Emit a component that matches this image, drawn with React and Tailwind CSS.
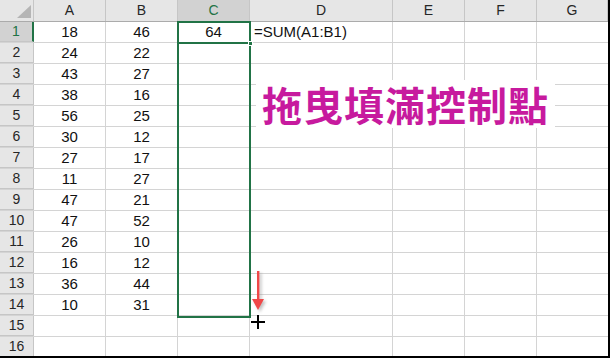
import React from "react";

const rows = [
  [18, 46], [24, 22], [43, 27], [38, 16], [56, 25], [30, 12], [27, 17],
  [11, 27], [47, 21], [47, 52], [26, 10], [16, 12], [36, 44], [10, 31], [], [],
];

const cols = [
  { key: "A", w: "w-[72px]" },
  { key: "B", w: "w-[72px]" },
  { key: "C", w: "w-[72px]" },
  { key: "D", w: "w-[143px]" },
  { key: "E", w: "w-[72px]" },
  { key: "F", w: "w-[72px]" },
  { key: "G", w: "flex-1" },
];

const HeaderRow = () => (
  <div className="flex h-[22px] border-b border-[#ababab] bg-[#e6e6e6]">
    {/* corner cell with the select-all triangle */}
    <div className="relative w-[34px] shrink-0 border-r border-[#c6c6c6]">
      <svg className="absolute left-[17px] top-[5px]" width="14" height="13" viewBox="0 0 14 13">
        <polygon points="14,0 14,13 0,13" fill="#b5b5b5" />
      </svg>
    </div>
    {cols.map((c) => (
      <div
        key={c.key}
        className={`${c.w} shrink-0 flex items-center justify-center border-r border-[#c6c6c6] text-[14px] ${
          c.key === "C" ? "bg-[#d2d2d2] text-[#217346]" : "text-[#262626]"
        }`}
      >
        {c.key}
      </div>
    ))}
  </div>
);

const DataRow = ({ n, vals }) => {
  const active = n === 1;
  return (
    <div className="flex h-[21px] border-b border-[#d4d4d4]">
      <div
        className={`w-[34px] shrink-0 flex items-center justify-center text-[14px] border-b border-[#c6c6c6] ${
          active
            ? "bg-[#d2d2d2] text-[#217346] border-r-2 border-r-[#217346]"
            : "bg-[#e6e6e6] text-[#262626] border-r border-r-[#c6c6c6]"
        }`}
      >
        {n}
      </div>
      <div className="w-[72px] shrink-0 flex items-center justify-center border-r border-[#d4d4d4]">{vals[0]}</div>
      <div className="w-[72px] shrink-0 flex items-center justify-center border-r border-[#d4d4d4]">{vals[1]}</div>
      <div className="w-[72px] shrink-0 flex items-center justify-center border-r border-[#d4d4d4]">{active ? 64 : ""}</div>
      <div className="w-[143px] shrink-0 flex items-center pl-[4px] border-r border-[#d4d4d4] whitespace-nowrap">
        {active ? "=SUM(A1:B1)" : ""}
      </div>
      <div className="w-[72px] shrink-0 border-r border-[#d4d4d4]" />
      <div className="w-[72px] shrink-0 border-r border-[#d4d4d4]" />
      <div className="flex-1" />
    </div>
  );
};

export default function App() {
  return (
    <div
      className="relative w-[610px] h-[358px] overflow-hidden bg-white border-r-2 border-b-2 border-black text-[15px] text-[#111]"
      style={{ fontFamily: '"Liberation Sans", Arial, sans-serif' }}
    >
      <HeaderRow />
      {rows.map((v, i) => (
        <DataRow key={i} n={i + 1} vals={v} />
      ))}

      {/* selected range C1:C14 */}
      <div className="absolute left-[177px] top-[21px] w-[74px] h-[297px] border-2 border-[#217346]" />
      <div className="absolute left-[177px] top-[42px] w-[74px] h-[2px] bg-[#217346]" />
      <div className="absolute left-[248px] top-[41px] w-[5px] h-[5px] bg-[#217346] border border-white" />

      {/* caption */}
      <div
        className="absolute left-[256px] top-[80px] px-[6px] py-[4px] bg-white text-[40px] font-bold leading-none tracking-[1px] text-[#c71a9e]"
        style={{ fontFamily: '"Noto Sans CJK TC", "Noto Sans CJK SC", sans-serif' }}
      >
        拖曳填滿控制點
      </div>

      {/* drag arrow */}
      <svg className="absolute left-[250px] top-[268px]" width="20" height="46" viewBox="0 0 20 46">
        <defs>
          <filter id="sh" x="-50%" y="-50%" width="200%" height="200%">
            <feGaussianBlur stdDeviation="1.6" />
          </filter>
        </defs>
        <g filter="url(#sh)" opacity="0.45" transform="translate(2,2)">
          <rect x="7" y="3" width="2.4" height="30" fill="#777" />
          <polygon points="2,31 14,31 8,42" fill="#777" />
        </g>
        <rect x="7" y="3" width="2.4" height="30" fill="#f04848" />
        <polygon points="2,31 14,31 8,42" fill="#f04848" />
      </svg>

      {/* fill cursor */}
      <div className="absolute left-[251px] top-[321px] w-[14px] h-[2px] bg-black" />
      <div className="absolute left-[257px] top-[315px] w-[2px] h-[14px] bg-black" />
    </div>
  );
}
